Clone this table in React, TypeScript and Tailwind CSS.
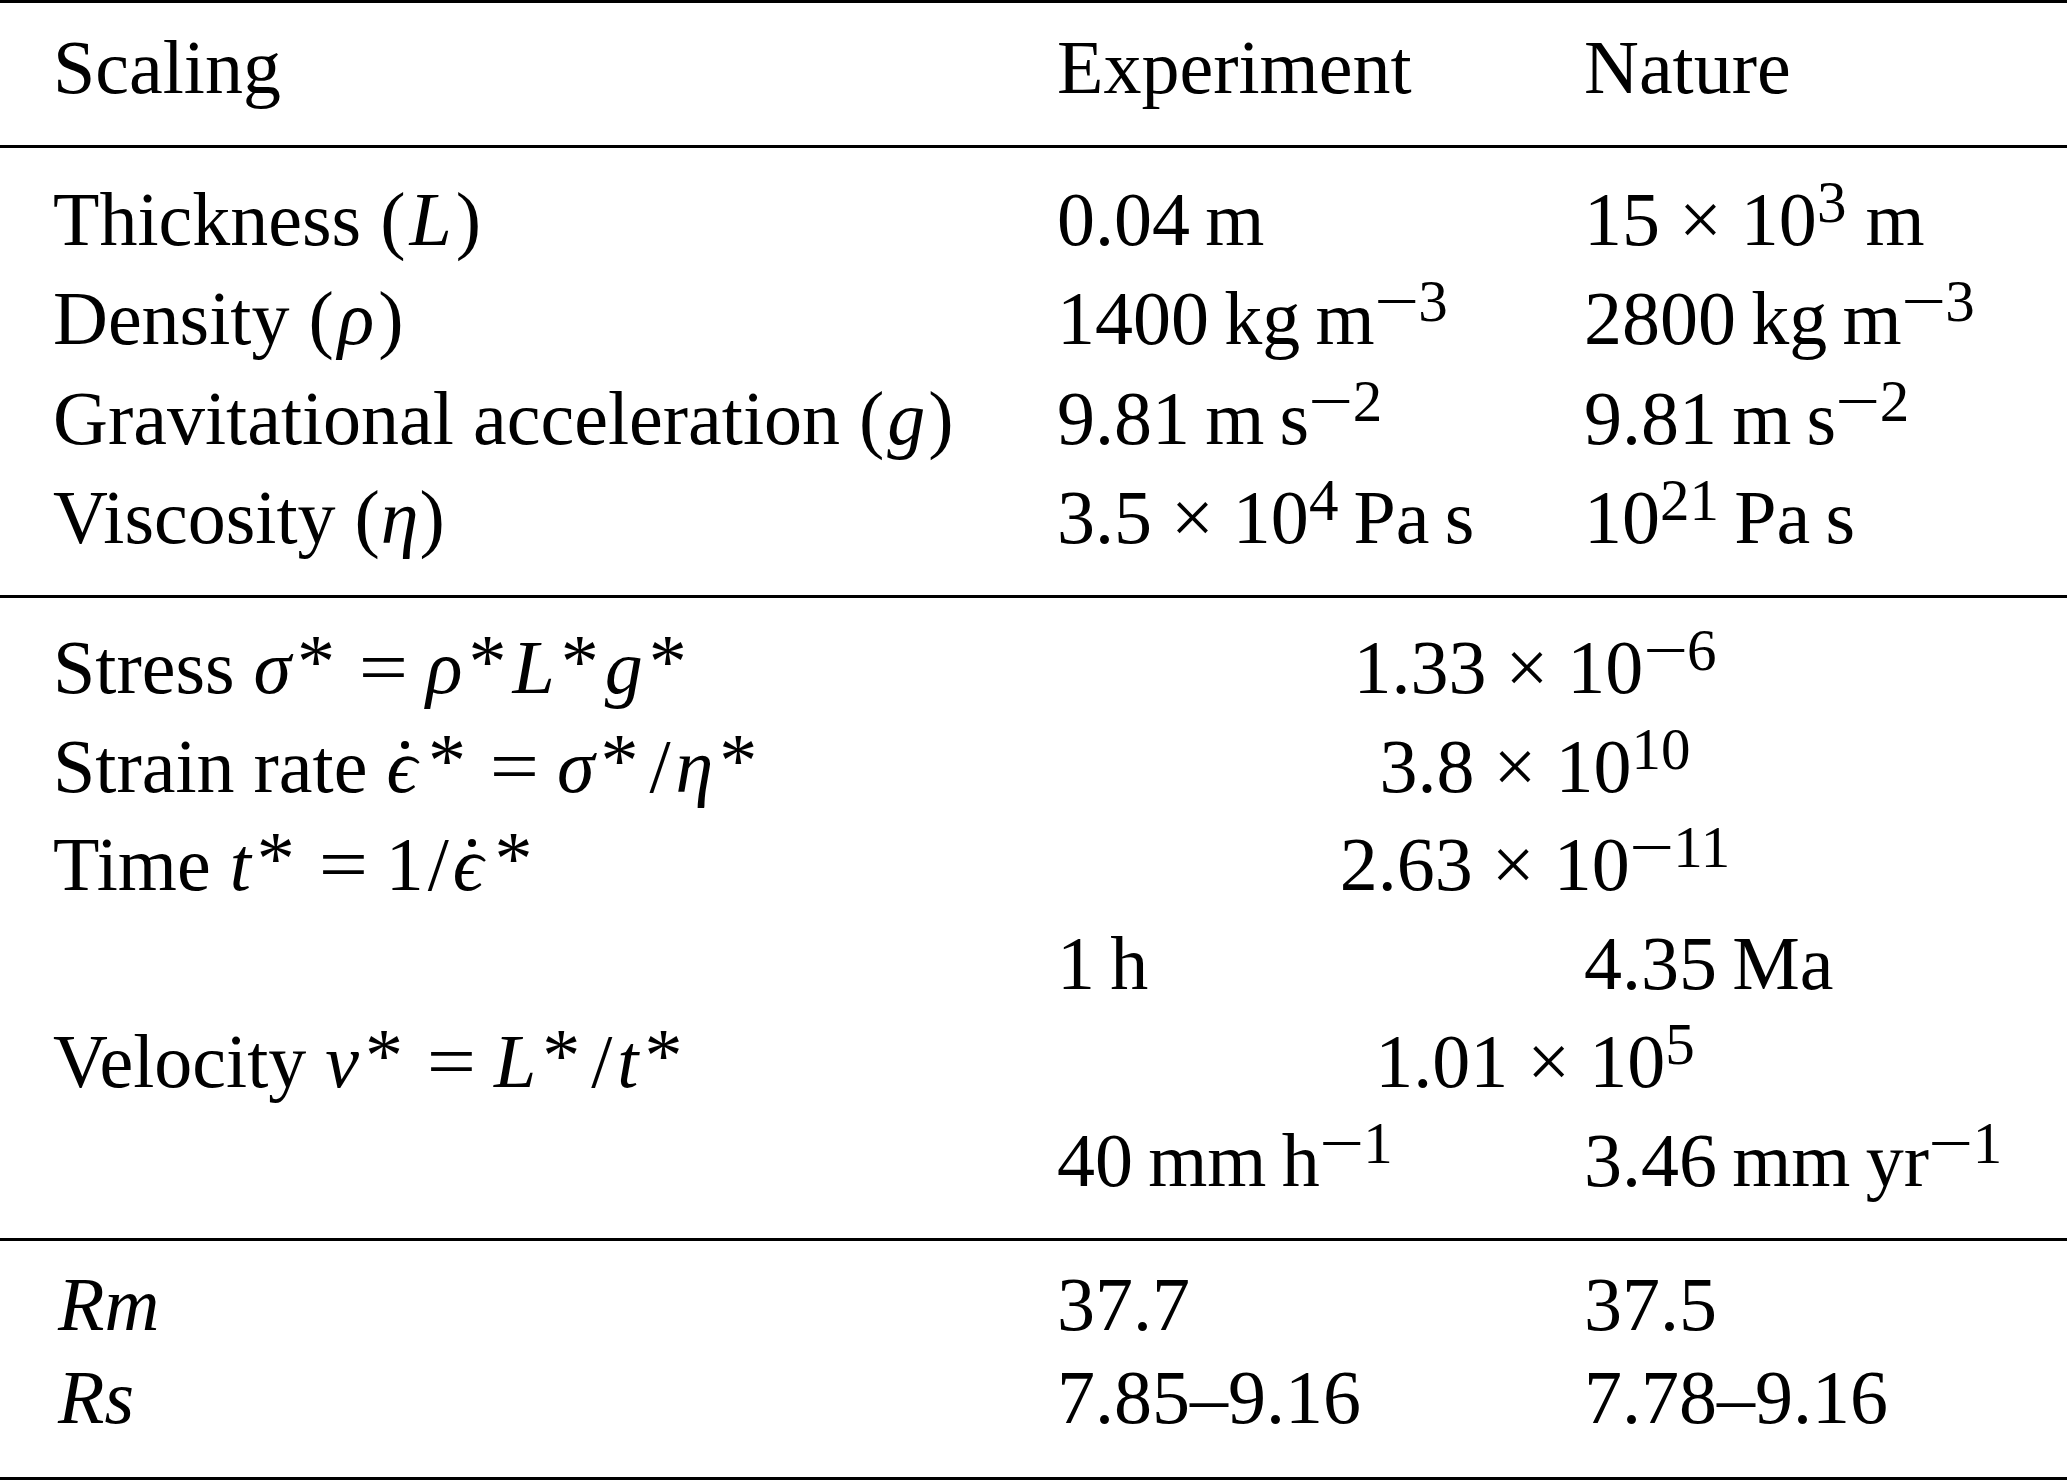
import React from 'react';

type Kids = { children?: React.ReactNode };

// superscript in the table's math (powers of ten, unit exponents)
const Sup = ({ children }: Kids) => (
  <span className="text-[59px] leading-[0] align-[23px]">{children}</span>
);

// long math minus used in the exponents
const Minus = () => (
  <span className="inline-block w-[0.74em] text-center leading-[0]">
    <span className="inline-block scale-x-[1.35]">−</span>
  </span>
);

const M = ({ children }: Kids) => <i className="italic">{children}</i>;

// starred scaled quantity
const Ast = () => <span className="leading-[0] align-[6px] px-[6px]">*</span>;

const EpsDot = () => (
  <span className="relative italic pr-[5px]">
    ϵ
    <span className="absolute left-[15px] top-[17px] h-[8px] w-[8px] rounded-full bg-black" />
  </span>
);

const Eq = () => (
  <span className="mx-[21px] inline-block leading-[0] scale-x-[1.15]">=</span>
);
const Sl = ({ m = 'mx-[5px]' }: { m?: string }) => <span className={m}>/</span>;

const Rule = () => <div className="h-[3px] w-full bg-black" />;

const row = 'grid grid-cols-[1004px_527px_1fr] pl-[53px] whitespace-nowrap';

const Row = ({ a, b, c, h }: { a?: React.ReactNode; b?: React.ReactNode; c?: React.ReactNode; h: string }) => (
  <div className={`${row} ${h}`}>
    <div>{a}</div>
    <div>{b}</div>
    <div>{c}</div>
  </div>
);

const Span = ({ a, v, h }: { a?: React.ReactNode; v: React.ReactNode; h: string }) => (
  <div className={`${row} ${h}`}>
    <div>{a}</div>
    <div className="col-span-2 pr-[54px] text-center">{v}</div>
  </div>
);

const thin = '\u2009';

export default function App() {
  const mid = 'h-[98.5px] leading-[98.5px]';
  return (
    <div className="w-[2067px] h-[1480px] bg-white text-black font-['Liberation_Serif','Times_New_Roman',serif] text-[76px]">
      <Rule />
      {/* header */}
      <div className="h-[142px] pt-[15px]">
        <Row h="h-[99px] leading-[99px]" a="Scaling" b="Experiment" c="Nature" />
      </div>
      <Rule />

      {/* physical parameters */}
      <div className="h-[447px] pt-[22px]">
        {[
          {
            a: <>Thickness (<span className="px-[4px]"><M>L</M></span>)</>,
            b: <>0.04{thin}m</>,
            c: <>15 × 10<Sup>3</Sup> m</>,
          },
          {
            a: <>Density (<span className="px-[4px]"><M>ρ</M></span>)</>,
            b: <>1400{thin}kg{thin}m<Sup><Minus />3</Sup></>,
            c: <>2800{thin}kg{thin}m<Sup><Minus />3</Sup></>,
          },
          {
            a: <>Gravitational acceleration (<span className="px-[3px]"><M>g</M></span>)</>,
            b: <>9.81{thin}m{thin}s<Sup><Minus />2</Sup></>,
            c: <>9.81{thin}m{thin}s<Sup><Minus />2</Sup></>,
          },
          {
            a: <>Viscosity (<span className="px-[1px]"><M>η</M></span>)</>,
            b: <>3.5 × 10<Sup>4</Sup>{thin}Pa{thin}s</>,
            c: <>10<Sup>21</Sup>{thin}Pa{thin}s</>,
          },
        ].map((r, i) => (
          <Row key={i} h="h-[99.4px] leading-[99.4px]" a={r.a} b={r.b} c={r.c} />
        ))}
      </div>
      <Rule />

      {/* scaling factors */}
      <div className="h-[640px] pt-[20px]">
        <Span
          h={mid}
          a={<>Stress <M>σ</M><Ast /><Eq /><M>ρ</M><Ast /><M>L</M><Ast /><M>g</M><Ast /></>}
          v={<>1.33 × 10<Sup><Minus />6</Sup></>}
        />
        <Span
          h={mid}
          a={<>Strain rate <EpsDot /><Ast /><Eq /><M>σ</M><Ast /><Sl /><M>η</M><Ast /></>}
          v={<>3.8 × 10<Sup>10</Sup></>}
        />
        <Span
          h={mid}
          a={<>Time <M>t</M><Ast /><Eq />1<Sl m="mx-[4px]" /><EpsDot /><Ast /></>}
          v={<>2.63 × 10<Sup><Minus />11</Sup></>}
        />
        <Row h={mid} b={<>1{thin}h</>} c={<>4.35{thin}Ma</>} />
        <Span
          h={mid}
          a={<>Velocity <M>v</M><Ast /><Eq /><M>L</M><Ast /><Sl /><M>t</M><Ast /></>}
          v={<>1.01 × 10<Sup>5</Sup></>}
        />
        <Row
          h={mid}
          b={<>40{thin}mm{thin}h<Sup><Minus />1</Sup></>}
          c={<>3.46{thin}mm{thin}yr<Sup><Minus />1</Sup></>}
        />
      </div>
      <Rule />

      {/* dimensionless numbers */}
      <div className="h-[236px] pt-[17px]">
        <Row h="h-[93.3px] leading-[93.3px]" a={<span className="pl-[5px]"><M>Rm</M></span>} b="37.7" c="37.5" />
        <Row h="h-[93.3px] leading-[93.3px]" a={<span className="pl-[5px]"><M>Rs</M></span>} b="7.85–9.16" c="7.78–9.16" />
      </div>
      <Rule />
    </div>
  );
}
